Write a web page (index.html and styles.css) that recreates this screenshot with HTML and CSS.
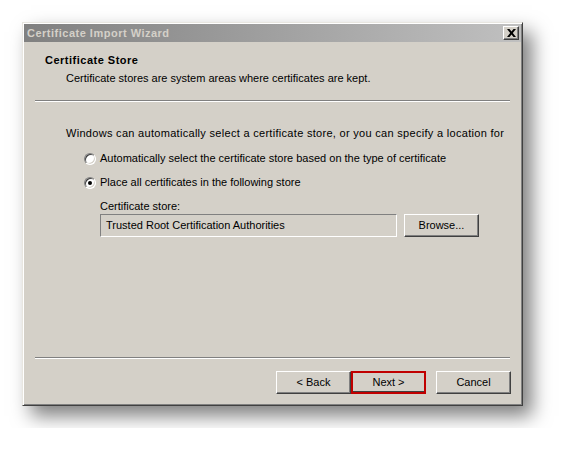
FILE: index.html
```html
<!DOCTYPE html>
<html lang="en">
<head>
    <meta charset="UTF-8">
    <meta name="viewport" content="width=device-width, initial-scale=1.0">
    <title>Certificate Import Wizard</title>
    <link rel="stylesheet" href="styles.css">
</head>
<body>
    <div class="dialog">
        <div class="titlebar">
            <span class="title">Certificate Import Wizard</span>
            <button class="close" aria-label="Close">
                <svg width="9" height="8" viewBox="0 0 9 8">
                    <path d="M0 0h2.5l2 2.6 2-2.6H9L5.8 4 9 8H6.5l-2-2.6-2 2.6H0l3.2-4z" fill="#000"/>
                </svg>
            </button>
        </div>

        <div class="header">
            <div class="heading">Certificate Store</div>
            <div class="subheading">Certificate stores are system areas where certificates are kept.</div>
        </div>
        <div class="sep"></div>

        <div class="content">
            <p class="intro">Windows can automatically select a certificate store, or you can specify a location for</p>
            <label class="option"><span class="radio"></span>Automatically select the certificate store based on the type of certificate</label>
            <label class="option"><span class="radio checked"></span>Place all certificates in the following store</label>
            <div class="store">
                <div class="store-label">Certificate store:</div>
                <div class="store-row">
                    <div class="field">Trusted Root Certification Authorities</div>
                    <button class="btn">Browse...</button>
                </div>
            </div>
        </div>

        <div class="sep"></div>
        <div class="footer">
            <button class="btn">&lt; Back</button>
            <button class="btn next">Next &gt;</button>
            <button class="btn cancel">Cancel</button>
        </div>
    </div>
</body>
</html>
```

FILE: styles.css
```css
*, *::before, *::after{
    box-sizing: border-box;
}
body{
    margin: 0;
    padding: 22px;
    background: #fff;
    font-family: "Liberation Sans", Arial, sans-serif;
    font-size: 11px;
    line-height: 13px;
    color: #000;
}

/* classic window frame */
.dialog{
    width: 501px;
    height: 384px;
    padding: 1px;
    display: flex;
    flex-direction: column;
    background: #d4d0c8;
    border: 1px solid;
    border-color: #e8e6e0 #404040 #404040 #e8e6e0;
    box-shadow: inset 1px 1px #fff, inset -1px -1px #808080, 9px 10px 18px rgba(0, 0, 0, .5);
}
.titlebar{
    height: 18px;
    padding: 0 2px 0 3px;
    display: flex;
    align-items: center;
    justify-content: space-between;
    background: linear-gradient(to right, #808080, #c0c0c0);
}
.title{
    color: #d4d0c8;
    font-weight: bold;
    letter-spacing: .5px;
}
.close{
    width: 16px;
    height: 14px;
    padding: 0;
    display: flex;
    align-items: center;
    justify-content: center;
    background: #d4d0c8;
    border: 1px solid;
    border-color: #fff #404040 #404040 #fff;
    box-shadow: inset -1px -1px #808080;
}

.header{
    padding: 12px 0 0 21px;
}
.heading{
    font-weight: bold;
    letter-spacing: .5px;
}
.subheading{
    margin: 5px 0 0 21px;
}
.sep{
    margin: 15px 11px 0;
    border-top: 1px solid #808080;
    border-bottom: 1px solid #fff;
}

.content{
    flex: 1;
    padding: 25px 0 0 42px;
}
.intro{
    margin: 0;
    letter-spacing: .3px;
}
.option{
    margin-top: 11px;
    padding-left: 18px;
    display: flex;
    align-items: center;
    gap: 4px;
}
.intro + .option{
    margin-top: 12px;
}
.radio{
    width: 12px;
    height: 12px;
    display: flex;
    align-items: center;
    justify-content: center;
    border-radius: 50%;
    background: #fff;
    border: 1px solid;
    border-color: #808080 #fff #fff #808080;
    box-shadow: inset 1px 1px #404040, inset -1px -1px #d4d0c8;
}
.radio.checked::after{
    content: "";
    width: 4px;
    height: 4px;
    border-radius: 50%;
    background: #000;
}

.store{
    margin-top: 11px;
    padding-left: 34px;
}
.store-row{
    margin-top: 1px;
    display: flex;
    gap: 7px;
}
.field{
    width: 297px;
    height: 23px;
    padding-left: 5px;
    line-height: 21px;
    border: 1px solid;
    border-color: #808080 #fff #fff #808080;
}

.btn{
    width: 75px;
    height: 23px;
    padding: 0;
    font: inherit;
    color: #000;
    background: #d4d0c8;
    border: 1px solid;
    border-color: #fff #404040 #404040 #fff;
    box-shadow: inset -1px -1px #808080;
}
.footer{
    margin-top: 12px;
    padding: 0 10px 10px 0;
    display: flex;
    justify-content: flex-end;
}
.btn.next{
    border: 2px solid #c00000;
    box-shadow: inset 0 -1px #404040;
}
.btn.cancel{
    margin-left: 10px;
}
```
